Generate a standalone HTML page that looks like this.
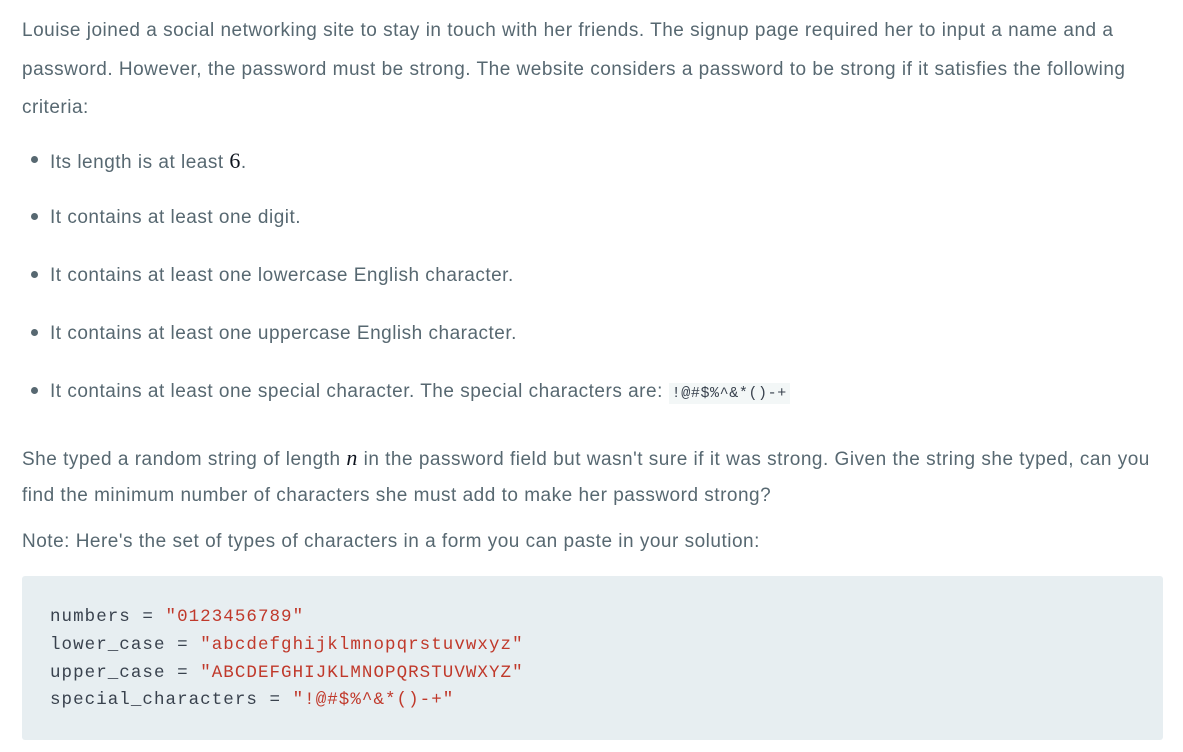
<!DOCTYPE html>
<html><head><meta charset="utf-8"><style>
body{margin:0;width:1183px;height:752px;background:#fff;position:relative;overflow:hidden;font-family:"Liberation Sans",sans-serif;color:#576871;font-size:19px;letter-spacing:0.5px}
.l{position:absolute;left:22px;white-space:nowrap;line-height:20px}
.b{position:absolute;left:50px;white-space:nowrap;line-height:20px}
.d{position:absolute;left:31px;width:7px;height:7px;border-radius:50%;background:#576871}
.m{font-family:"Liberation Serif",serif;font-style:italic;color:#0e141e;font-size:22px}
.six{font-family:"Liberation Serif",serif;color:#0e141e;font-size:22px}
code{font-family:"Liberation Mono",monospace;font-size:15px;letter-spacing:0.6px;background:#f3f7f7;padding:2px 3px;color:#39424e}
.pre{position:absolute;left:22px;top:576px;width:1141px;height:164px;background:#e7eef1;border-radius:3px}
.c{position:absolute;left:50px;font-family:"Liberation Mono",monospace;font-size:17.5px;letter-spacing:1.05px;color:#39424e;white-space:pre;line-height:20px}
.s{color:#c0392b}
</style></head><body>
<div class="l" style="top:21px">Louise joined a social networking site to stay in touch with her friends. The signup page required her to input a name and a</div>
<div class="l" style="top:60px">password. However, the password must be strong. The website considers a password to be strong if it satisfies the following</div>
<div class="l" style="top:98px">criteria:</div>
<div class="d" style="top:156px"></div><div class="b" style="top:151px">Its length is at least <span class="six">6</span>.</div>
<div class="d" style="top:213px"></div><div class="b" style="top:208px">It contains at least one digit.</div>
<div class="d" style="top:271px"></div><div class="b" style="top:266px">It contains at least one lowercase English character.</div>
<div class="d" style="top:329px"></div><div class="b" style="top:324px">It contains at least one uppercase English character.</div>
<div class="d" style="top:387px"></div><div class="b" style="top:382px">It contains at least one special character. The special characters are: <code>!@#$%^&amp;*()-+</code></div>
<div class="l" style="top:448px">She typed a random string of length <span class="m">n</span> in the password field but wasn't sure if it was strong. Given the string she typed, can you</div>
<div class="l" style="top:486px">find the minimum number of characters she must add to make her password strong?</div>
<div class="l" style="top:532px">Note: Here's the set of types of characters in a form you can paste in your solution:</div>
<div class="pre"></div>
<div class="c" style="top:607px">numbers = <span class="s">"0123456789"</span></div>
<div class="c" style="top:635px">lower_case = <span class="s">"abcdefghijklmnopqrstuvwxyz"</span></div>
<div class="c" style="top:663px">upper_case = <span class="s">"ABCDEFGHIJKLMNOPQRSTUVWXYZ"</span></div>
<div class="c" style="top:690px">special_characters = <span class="s">"!@#$%^&amp;*()-+"</span></div>
</body></html>
